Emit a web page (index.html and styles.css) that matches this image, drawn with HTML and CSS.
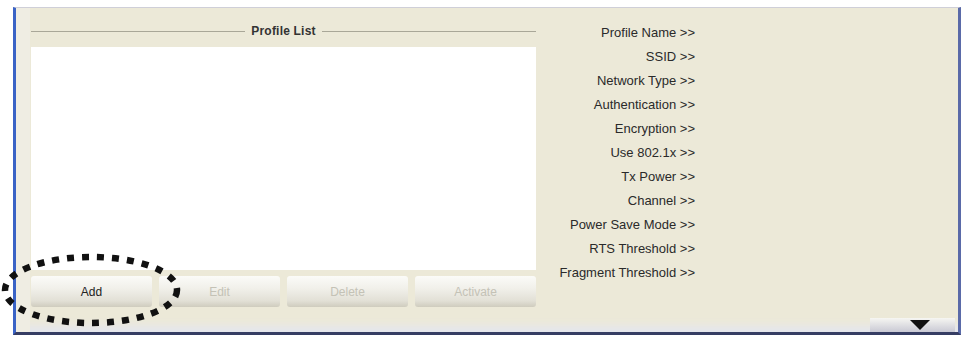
FILE: index.html
```html
<!DOCTYPE html>
<html>
<head>
<meta charset="utf-8">
<link rel="stylesheet" href="styles.css">
</head>
<body>
<div class="frame">
  <div class="left">
    <div class="legend"><span class="rule"></span><span class="legend-text">Profile List</span><span class="rule"></span></div>
    <div class="listbox"></div>
    <div class="buttons">
      <div class="btn">Add</div>
      <div class="btn disabled">Edit</div>
      <div class="btn disabled">Delete</div>
      <div class="btn disabled">Activate</div>
    </div>
  </div>
  <div class="right">
    <div class="labels">
      <div class="label">Profile Name &gt;&gt;</div>
      <div class="label">SSID &gt;&gt;</div>
      <div class="label">Network Type &gt;&gt;</div>
      <div class="label">Authentication &gt;&gt;</div>
      <div class="label">Encryption &gt;&gt;</div>
      <div class="label">Use 802.1x &gt;&gt;</div>
      <div class="label">Tx Power &gt;&gt;</div>
      <div class="label">Channel &gt;&gt;</div>
      <div class="label">Power Save Mode &gt;&gt;</div>
      <div class="label">RTS Threshold &gt;&gt;</div>
      <div class="label">Fragment Threshold &gt;&gt;</div>
    </div>
    <div class="more">
      <svg width="20" height="10" viewBox="0 0 20 10"><polygon points="0,0 20,0 10,10" fill="#111"/></svg>
    </div>
  </div>
</div>
<svg class="highlight" width="184" height="78" viewBox="0 0 184 78">
  <ellipse cx="91" cy="38" rx="86" ry="33" fill="none" stroke="#111" stroke-width="6.5" stroke-dasharray="7 8"/>
</svg>
</body>
</html>
```
FILE: styles.css
```css
html, body {
  margin: 0;
  padding: 0;
  background: #ffffff;
}
body {
  position: relative;
  width: 962px;
  height: 337px;
  overflow: hidden;
  font-family: "Liberation Sans", Arial, sans-serif;
}
.frame {
  box-sizing: border-box;
  margin: 7px 0 0 13px;
  width: 948px;
  height: 328px;
  background: #ece9d8;
  border-top: 1px solid #cfcfd8;
  border-left: 3px solid #3a63c6;
  border-right: 3px solid #5a6aa8;
  border-bottom: 3px solid #363d63;
  display: flex;
  box-shadow: inset 14px 0 0 #efede3, inset 0 -14px 8px -8px #e4e6ee;
}
.left {
  width: 505px;
  margin-left: 15px;
  padding-top: 15px;
  display: flex;
  flex-direction: column;
}
.legend {
  display: flex;
  align-items: center;
  height: 16px;
  gap: 6px;
}
.rule {
  flex: 1;
  height: 1px;
  background: #a9a798;
}
.legend-text {
  font-size: 12px;
  color: #333;
  font-weight: bold;
  letter-spacing: 0.2px;
}
.listbox {
  margin-top: 8px;
  height: 223px;
  background: #ffffff;
}
.buttons {
  margin-top: 6px;
  display: grid;
  grid-template-columns: repeat(4, 1fr);
  gap: 7px;
}
.btn {
  height: 31px;
  border-radius: 3px;
  background: linear-gradient(#fbfbf8 0%, #f1f0ea 40%, #e2e0d6 80%, #cfccbe 100%);
  display: flex;
  align-items: center;
  justify-content: center;
  font-size: 12px;
  color: #222;
}
.btn.disabled {
  color: #c4c2b6;
}
.right {
  flex: 1;
  display: flex;
  flex-direction: column;
  padding-top: 13px;
}
.labels {
  width: 159px;
  display: flex;
  flex-direction: column;
  align-items: flex-end;
}
.label {
  height: 24px;
  line-height: 24px;
  font-size: 13px;
  color: #2a2a2a;
  white-space: nowrap;
}
.more {
  margin-top: auto;
  align-self: flex-end;
  margin-right: 3px;
  width: 85px;
  height: 14px;
  background: linear-gradient(#f6f6f2, #c9c9d4);
  display: flex;
  justify-content: center;
  align-items: center;
  padding-left: 14px;
  box-sizing: border-box;
}
.more svg {
  display: block;
}
.highlight {
  position: absolute;
  left: 0;
  top: 252px;
}
```
